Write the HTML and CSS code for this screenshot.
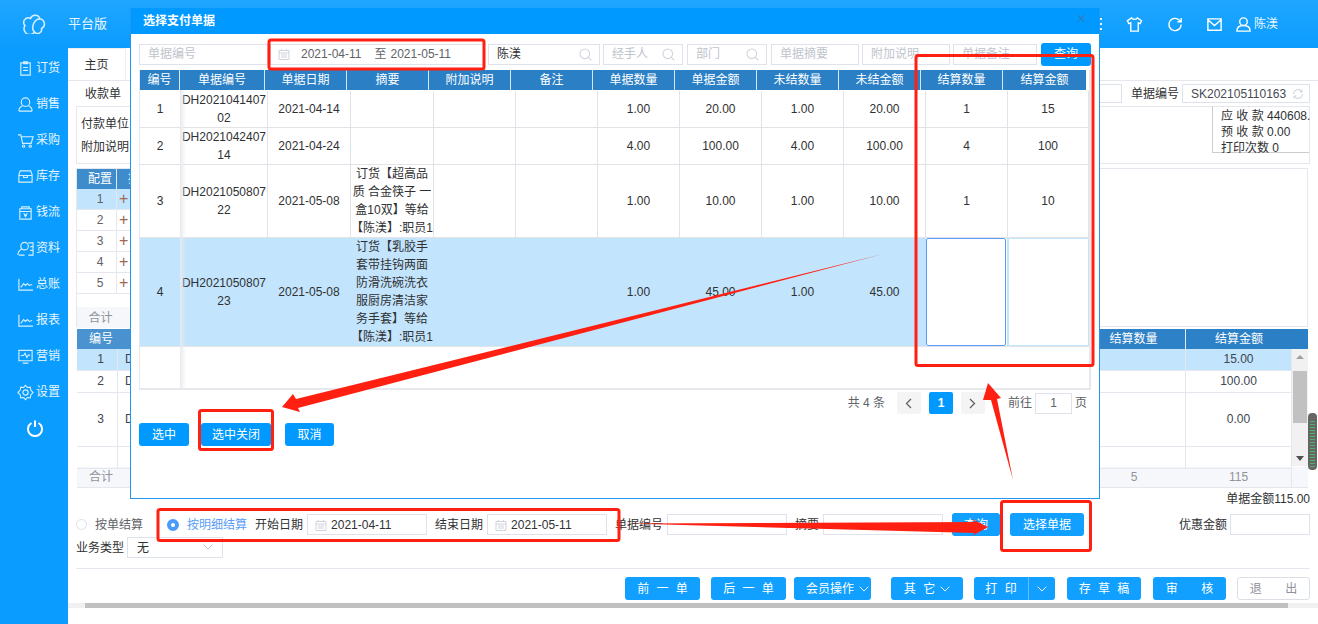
FILE: index.html
```html
<!DOCTYPE html>
<html lang="zh">
<head>
<meta charset="utf-8">
<title>选择支付单据</title>
<link rel="stylesheet" href="styles.css">
</head>
<body>
<svg class="defs" width="0" height="0">
  <symbol id="cal" viewBox="0 0 12 12"><path d="M1 2.500h10v9H1zM1 5h10M3.500 1v2M8.500 1v2M3 7h6M3 9h6" fill="none" stroke="currentColor"/></symbol>
  <symbol id="search" viewBox="0 0 13 13"><circle cx="5.800" cy="5.800" r="4.800" fill="none" stroke="currentColor" stroke-width="1.100"/><path d="M9.300 9.300l3 3" stroke="currentColor" stroke-width="1.100"/></symbol>
  <symbol id="chev" viewBox="0 0 10 6"><path d="M.7.700L5 5l4.300-4.300" fill="none" stroke="currentColor"/></symbol>
</svg>
<div class="app">
  <aside class="side">
    <div class="logo">
      <svg width="24" height="20" viewBox="0 0 24 20" fill="none" stroke="#d8efff" stroke-width="1.500"><path d="M7.500 4.500A5 5 0 0 1 17 5a5 5 0 0 1 1.500 9.500 4 4 0 0 1-7 3.500A5.500 5.500 0 0 1 2 11.500a4.500 4.500 0 0 1 5.500-7z"/><path d="M17 5c-3.500-.5-5 1.500-6.500 5S9.500 16 11.500 18"/></svg>
    </div>
    <nav class="nav">
      <a class="nav-i"><svg viewBox="0 0 18 18"><path d="M4 3h10v13H4zM7 2h4v2H7zM6.500 8h5M6.500 11h5"/></svg><span>订货</span></a>
      <a class="nav-i"><svg viewBox="0 0 18 18"><circle cx="9" cy="6.500" r="4.500"/><path d="M2 16c0-4 3-5.500 4.500-6M16 16c0-4-3-5.500-4.500-6M2 16h14"/></svg><span>销售</span></a>
      <a class="nav-i"><svg viewBox="0 0 18 18"><path d="M1 3h3l2 9h9l2-7H5"/><circle cx="7" cy="15" r="1.200"/><circle cx="14" cy="15" r="1.200"/></svg><span>采购</span></a>
      <a class="nav-i"><svg viewBox="0 0 18 18"><path d="M2 7l1.500-4h11L16 7v8H2zM2 8h14M7 8v2h4V8"/></svg><span>库存</span></a>
      <a class="nav-i"><svg viewBox="0 0 18 18"><path d="M5 5V3h8v2M3 5h12v11H3zM3 8h12M7 10l2 2 2-2M9 12v2M7.500 12.500h3"/></svg><span>钱流</span></a>
      <a class="nav-i"><svg viewBox="0 0 18 18"><circle cx="8" cy="6.500" r="4"/><path d="M1 16c0-4 2-5.500 4-6.500M2 16h6M12 3h5v13h-5M14 7h3M14 11h3"/></svg><span>资料</span></a>
      <a class="nav-i"><svg viewBox="0 0 18 18"><path d="M2 3v12h15M4 12l3-4 2 2 2-2 2 2 3-1"/></svg><span>总账</span></a>
      <a class="nav-i"><svg viewBox="0 0 18 18"><path d="M2 3v12h15M4 12l3-4 2 2 2-2 2 2 3-1"/></svg><span>报表</span></a>
      <a class="nav-i"><svg viewBox="0 0 18 18"><path d="M2 2.500h14v11H2zM6 16h6M4 8h3l1.500-2.500 2 4.500L12 7.500h2"/></svg><span>营销</span></a>
      <a class="nav-i"><svg viewBox="0 0 18 18"><path d="M9 1.500l2 2.200 3-.3.600 3L17 9l-2.400 2.600-.6 3-3-.3-2 2.200-2-2.200-3 .3-.6-3L1 9l2.400-2.600.6-3 3 .3z"/><circle cx="9" cy="9" r="2.800"/></svg><span>设置</span></a>
      <a class="nav-i nav-power"><svg viewBox="0 0 18 18"><path d="M5.500 4a7 7 0 1 0 7 0M9 1.500V8"/></svg></a>
    </nav>
  </aside>
  <main class="main">
    <header class="top">
      <span class="brand">平台版</span>
      <div class="top-r">
        <span class="dots"></span>
        <svg class="tic t1" viewBox="0 0 18 18"><path d="M6 2L1.500 5l1.500 3 2-.8V16h8V7.200l2 .8 1.500-3L12 2c-.5 2-5.500 2-6 0z"/></svg>
        <svg class="tic t2" viewBox="0 0 18 18"><path d="M15 9a6.500 6.500 0 1 1-2-4.700L15 6M15 2v4h-4"/></svg>
        <svg class="tic t3" viewBox="0 0 18 18"><path d="M2 3h14v12H2zM2 4l7 6 7-6"/></svg>
        <svg class="tic t4" viewBox="0 0 18 18"><circle cx="9" cy="6" r="4"/><path d="M2 16c0-4 3-6 7-6s7 2 7 6z"/></svg>
        <span class="uname">陈渼</span>
      </div>
    </header>
    <div class="tabs"><span class="tab">主页</span></div>
    <div class="content">
      <div class="row1">
        <span class="r1-t">收款单</span>
        <span class="inp r1-a"></span>
        <span class="r1-l">单据编号</span>
        <span class="inp r1-b">SK202105110163<svg width="12" height="12" viewBox="0 0 12 12" fill="none" stroke="#c5d0d8"><path d="M10.500 6A4.500 4.500 0 0 1 2 8M1.500 6A4.500 4.500 0 0 1 10 4M10 1.500V4H7.500M2 10.500V8h2.500"/></svg></span>
      </div>
      <div class="info">
        <div class="info-l"><div>付款单位</div><div>附加说明</div></div>
        <div class="info-r"><div>应 收 款 440608.</div><div>预 收 款 0.00</div><div>打印次数 0</div></div>
      </div>
      <section class="g1">
        <div class="g1-h"><span>配置</span><span>操</span></div>
        <div class="g1-r on"><span>1</span><span class="plus">+</span></div>
        <div class="g1-r"><span>2</span><span class="plus">+</span></div>
        <div class="g1-r"><span>3</span><span class="plus">+</span></div>
        <div class="g1-r"><span>4</span><span class="plus">+</span></div>
        <div class="g1-r"><span>5</span><span class="plus">+</span></div>
        <div class="g1-sum"><span>合计</span></div>
      </section>
      <section class="g2">
        <div class="g2-h g2-c"><span>编号</span><span></span><span>结算数量</span><span>结算金额</span><span></span></div>
        <div class="g2-bwrap">
          <div class="g2-rows">
            <div class="g2-r g2-c2 on"><span>1</span><span class="l">D</span><span></span><span>15.00</span></div>
            <div class="g2-r g2-c2"><span>2</span><span class="l">D</span><span></span><span>100.00</span></div>
            <div class="g2-r g2-c2 tall"><span>3</span><span class="l">D</span><span></span><span>0.00</span></div>
            <div class="g2-r g2-c2"><span></span><span></span><span></span><span></span></div>
          </div>
          <div class="vbar"><i class="up"></i><b></b><i class="dn"></i></div>
        </div>
        <div class="g2-sum g2-c"><span>合计</span><span></span><span>5</span><span>115</span><span></span></div>
      </section>
      <div class="amount">单据金额115.00</div>
      <div class="f-row">
        <span class="radio"></span><span class="f-lab">按单结算</span>
        <span class="radio sel"></span><span class="f-lab act">按明细结算</span>
        <label class="fld"><span>开始日期</span><span class="inp w120"><svg class="ci" width="12" height="12"><use href="#cal"/></svg>2021-04-11</span></label>
        <label class="fld"><span>结束日期</span><span class="inp w120"><svg class="ci" width="12" height="12"><use href="#cal"/></svg>2021-05-11</span></label>
        <label class="fld"><span>单据编号</span><span class="inp w120"></span></label>
        <label class="fld"><span>摘要</span><span class="inp w120"></span></label>
        <button class="btn f-q">查询</button>
        <button class="btn f-s">选择单据</button>
        <label class="fld disc"><span>优惠金额</span><span class="inp w80"></span></label>
      </div>
      <div class="type-row"><span>业务类型</span><span class="inp sel-i">无<svg class="chv" width="10" height="6"><use href="#chev"/></svg></span></div>
      <hr class="rule">
      <div class="acts">
        <button class="btn a75 g11 sp">前 一 单</button>
        <button class="btn a75 g8 sp">后 一 单</button>
        <button class="btn a77 g20">会员操作<svg width="10" height="6"><use href="#chev"/></svg></button>
        <button class="btn a72 g11 sp">其 它<svg width="10" height="6"><use href="#chev"/></svg></button>
        <div class="split g12"><button class="btn sp">打 印</button><button class="btn ar"><svg width="10" height="6"><use href="#chev"/></svg></button></div>
        <button class="btn a74 g12 sp">存 草 稿</button>
        <button class="btn a73 g11 spw">审 核</button>
        <button class="btn ghost spw">退 出</button>
      </div>
    </div>
    <div class="hbar"><b></b></div>
  </main>

  <div class="modal">
    <div class="m-head"><span>选择支付单据</span><span class="m-x">×</span></div>
    <div class="m-body">
      <div class="m-tools">
        <span class="inp ph t129">单据编号</span>
        <span class="inp t215"><svg class="ci" width="12" height="12"><use href="#cal"/></svg><span class="dr">2021-04-11</span><span class="dr2">至</span><span>2021-05-11</span></span>
        <span class="inp t112 dark">陈渼<svg class="si" width="13" height="13"><use href="#search"/></svg></span>
        <span class="inp ph t80">经手人<svg class="si" width="13" height="13"><use href="#search"/></svg></span>
        <span class="inp ph t80">部门<svg class="si" width="13" height="13"><use href="#search"/></svg></span>
        <span class="inp ph t88">单据摘要</span>
        <span class="inp ph t88">附加说明</span>
        <span class="inp ph t84">单据备注</span>
        <button class="btn m-q">查询</button>
      </div>
      <div class="m-table">
        <div class="m-th">
          <span>编号</span><span>单据编号</span><span>单据日期</span><span>摘要</span><span>附加说明</span><span>备注</span><span>单据数量</span><span>单据金额</span><span>未结数量</span><span>未结金额</span><span>结算数量</span><span>结算金额</span>
        </div>
        <div class="m-tr h37">
          <span class="num">1</span><span>DH202104140702</span><span>2021-04-14</span><span></span><span></span><span></span><span>1.00</span><span>20.00</span><span>1.00</span><span>20.00</span><span>1</span><span>15</span>
        </div>
        <div class="m-tr h37">
          <span>2</span><span>DH202104240714</span><span>2021-04-24</span><span></span><span></span><span></span><span>4.00</span><span>100.00</span><span>4.00</span><span>100.00</span><span>4</span><span>100</span>
        </div>
        <div class="m-tr h73">
          <span>3</span><span>DH202105080722</span><span>2021-05-08</span><span>订货【超高品<br>质 合金筷子 一<br>盒10双】等给<br>【陈渼】:职员1</span><span></span><span></span><span>1.00</span><span>10.00</span><span>1.00</span><span>10.00</span><span>1</span><span>10</span>
        </div>
        <div class="m-tr h109 sel-row">
          <span>4</span><span>DH202105080723</span><span>2021-05-08</span><span>订货【乳胶手<br>套带挂钩两面<br>防滑洗碗洗衣<br>服厨房清洁家<br>务手套】等给<br>【陈渼】:职员1</span><span></span><span></span><span>1.00</span><span>45.00</span><span>1.00</span><span>45.00</span><span class="edit"><i></i></span><span class="edit2"></span>
        </div>
        <div class="m-shadow"></div>
      </div>
      <div class="pager">
        <span class="p-t">共 4 条</span>
        <span class="p-b"><svg width="7" height="11" viewBox="0 0 7 11" fill="none" stroke="#606266" stroke-width="1.300"><path d="M6 1L1.500 5.500 6 10"/></svg></span>
        <span class="p-b cur">1</span>
        <span class="p-b"><svg width="7" height="11" viewBox="0 0 7 11" fill="none" stroke="#606266" stroke-width="1.300"><path d="M1 1l4.500 4.500L1 10"/></svg></span>
        <span class="p-go">前往</span><span class="inp p-i">1</span><span class="p-pg">页</span>
      </div>
      <div class="m-foot">
        <button class="btn b50">选中</button>
        <button class="btn b70">选中关闭</button>
        <button class="btn b49">取消</button>
      </div>
    </div>
  </div>

  <div class="thumb-float"></div>

  <svg class="marks" width="1318" height="624" viewBox="0 0 1318 624">
    <g fill="none" stroke="#ff2012" stroke-width="3">
      <rect x="269" y="40" width="215" height="29" rx="2"/>
      <rect x="916" y="55.500" width="177" height="310" rx="2"/>
      <rect x="199.500" y="410.500" width="73" height="39" rx="2"/>
      <rect x="158" y="509.500" width="461" height="31" rx="2"/>
      <rect x="1001.500" y="501.500" width="89" height="49" rx="2"/>
    </g>
    <g fill="#ff2012">
      <polygon points="883,254 296,399 293,394 282,407 300,412 298,408"/>
      <polygon points="1013,480 997,399 1001,398 988,383 983,400 991,400"/>
      <polygon points="628,523.500 975,522 972,519 988,527 972,536 975,533"/>
    </g>
  </svg>
</div>
</body>
</html>
```
FILE: styles.css
```css
* { box-sizing: border-box; }
html, body { margin: 0; height: 100%; overflow: hidden; background: #fff; }
body { font: 12px/18px "Liberation Sans", "Noto Sans CJK SC", sans-serif; color: #303133; }
.defs { position: absolute; }
button { font: inherit; border: 0; padding: 0; }
.app { position: relative; display: flex; width: 1318px; height: 624px; overflow: hidden; }

/* sidebar */
.side { flex: none; width: 68px; background: #0a9cff; color: #e6f5ff; }
.logo { height: 50px; padding: 14px 0 0 23px; background: linear-gradient(#1fa6ff, #0a9cff); }
.nav { display: flex; flex-direction: column; }
.nav-i { display: flex; align-items: center; height: 36px; padding-left: 17px; gap: 2px; }
.nav-i svg { width: 17px; height: 17px; fill: none; stroke: #d6efff; stroke-width: 1.200; flex: none; }
.nav-power { padding-left: 26px; }
.nav-power svg { width: 18px; height: 18px; stroke: #fff; stroke-width: 2; }

/* top bar */
.main { flex: 1; min-width: 0; display: flex; flex-direction: column; }
.top { flex: none; height: 48px; display: flex; align-items: center; color: #e6f5ff; background: linear-gradient(#1fa6ff, #0a9cff); }
.brand { font-size: 13px; }
.top-r { margin-left: auto; display: flex; align-items: center; padding-right: 40px; }
.dots { width: 2px; height: 12px; margin-right: 24px; background: repeating-linear-gradient(#e6f5ff 0 2px, transparent 2px 5px); }
.tic { width: 17px; height: 17px; fill: none; stroke: #fff; stroke-width: 1.500; }
.t2 { margin-left: 24px; }
.t3 { margin-left: 22px; }
.t4 { margin-left: 12px; }
.uname { margin-left: 2px; }

.tabs { flex: none; height: 33px; border-bottom: 1px solid #e4e7ed; }
.tab { display: inline-flex; align-items: center; justify-content: center; width: 58px; height: 32px; border: 1px solid #eceef2; border-width: 1px 1px 0 0; color: #303133; }

/* page */
.content { flex: none; height: 519px; padding: 3px 8px 0; }
.inp { display: inline-flex; align-items: center; height: 21px; border: 1px solid #dfe2ea; background: #fff; }
.row1 { display: flex; align-items: center; height: 19px; }
.r1-t { margin-left: 9px; }
.r1-a { margin-left: auto; width: 120px; height: 19px; }
.r1-l { margin: 0 3px 0 9px; }
.r1-b { width: 128px; height: 19px; padding-left: 8px; gap: 6px; color: #454a52; }
.info { display: flex; justify-content: space-between; height: 58px; margin-top: 3px; border: 1px solid #e4e7ed; }
.info-l { padding: 6px 0 0 4px; line-height: 23px; }
.info-r { width: 97px; height: 47px; padding: 2px 0 0 8px; border: 1px solid #ccc; border-width: 0 0 1px 1px; line-height: 16px; white-space: nowrap; margin-top: -1px; }
.g1 { height: 159px; margin-top: 4px; width: 1232px; border: 1px solid #e4e7ed; }
.g1-h, .g1-r, .g1-sum { display: flex; align-items: center; width: 74px; }
.g1-h { height: 20px; background: #3f8ccc; color: #fff; }
.g1-h span, .g1-r span { height: 100%; display: flex; align-items: center; justify-content: center; border-right: 1px solid #e4e7ed; }
.g1-h span:first-child, .g1-r span:first-child { width: 40px; padding-left: 7px; }
.g1-h span:last-child, .g1-r span:last-child { width: 34px; border-right: 0; }
.g1-r { height: 21px; border-bottom: 1px solid #e4e7ed; color: #606266; }
.g1-r .plus { color: #a06a50; font-size: 16px; justify-content: flex-start; padding-left: 2px; }
.g1-sum { height: 21px; margin-top: 13px; background: #f5f7fa; color: #909399; }
.g1-sum span { width: 40px; text-align: center; padding-left: 7px; }
.on { background: #c2e4fd; }
.g2 { height: 158px; margin-top: 2px; width: 1231px; margin-left: 1px; }
.g2-c { display: grid; grid-template-columns: 41px 1fr 104px 106px 16px; align-items: stretch; text-align: center; }
.g2-c2 { display: grid; grid-template-columns: 41px 1fr 104px 106px; text-align: center; }
.g2-h { height: 20px; line-height: 20px; color: #fff; background: linear-gradient(90deg, #4a93d0, #2a7fc5); }
.g2-c span:first-child { padding-left: 7px; }
.g2-h span:nth-child(3) { border-right: 1px solid #dcecf8; }
.g2-bwrap { display: flex; height: 117px; }
.g2-rows { flex: 1; }
.g2-r { height: 22px; border-bottom: 1px solid #e4e7ed; color: #404550; align-items: center; line-height: 21px; }
.g2-r.tall { height: 54px; }
.g2-r span { height: 100%; display: flex; align-items: center; justify-content: center; border-right: 1px solid #e4e7ed; }
.g2-r span:first-child { padding-left: 7px; }
.g2-r .l { justify-content: flex-start; padding-left: 7px; border-right: 0; }
.vbar { flex: none; width: 16px; background: #f1f1f1; display: flex; flex-direction: column; align-items: center; }
.vbar b { display: block; width: 14px; height: 52px; background: #c1c1c1; margin-top: 12px; }
.vbar i { display: block; width: 0; height: 0; border: 4px solid transparent; }
.vbar .up { border-bottom: 4px solid #a0a0a0; border-top: 0; margin-top: 6px; }
.vbar .dn { border-top: 5px solid #505050; border-bottom: 0; margin-top: auto; margin-bottom: 5px; }
.g2-sum { height: 21px; line-height: 20px; background: #f5f7fa; border-bottom: 1px solid #e4e7ed; color: #909399; margin-top: 1px; }
.g2-sum span:nth-child(4) { border-right: 1px solid #e4e7ed; }
.amount { height: 18px; margin-top: 3px; text-align: right; line-height: 18px; }
.f-row { display: flex; align-items: center; height: 21px; margin-top: 6px; }
.radio { flex: none; width: 11px; height: 11px; border: 1px solid #dcdfe6; border-radius: 50%; }
.radio.sel { border: 4px solid #4a9cf8; margin-left: 24px; background: #fff; width: 12px; height: 12px; }
.f-lab { margin-left: 8px; color: #606266; }
.f-lab.act { color: #5a9cf8; }
.fld { display: flex; align-items: center; gap: 4px; margin-left: 8px; }
.w120 { width: 120px; }
.w80 { width: 80px; }
.ci { color: #cfd3dc; flex: none; margin: 0 4px 0 7px; }
.btn { display: inline-flex; align-items: center; justify-content: center; gap: 5px; height: 23px; color: #fff; background: #11a0ff; border-radius: 3px; white-space: pre; }
.f-q { width: 48px; margin-left: 9px; }
.f-s { width: 74px; margin-left: 10px; }
.disc { margin-left: auto; gap: 3px; }
.type-row { display: flex; align-items: center; gap: 3px; height: 21px; margin-top: 2px; }
.sel-i { width: 96px; padding-left: 9px; position: relative; }
.chv { position: absolute; right: 9px; top: 6px; color: #c0c4cc; }
.rule { height: 1px; margin: 10px 0 0; border: 0; background: #e4e7ed; }
.acts { display: flex; align-items: center; height: 23px; margin-top: 8px; padding-left: 549px; }
.acts > * { flex: none; }
.g8 { margin-right: 8px; }
.g11 { margin-right: 11px; }
.g12 { margin-right: 12px; }
.g20 { margin-right: 20px; }
.a75 { width: 75px; }
.a77 { width: 77px; padding-left: 10px; }
.a72 { width: 72px; }
.a74 { width: 74px; }
.a73 { width: 73px; }
.sp { word-spacing: 4px; }
.spw { word-spacing: 20px; }
.split { display: flex; width: 81px; }
.split .btn:first-child { width: 55px; border-radius: 3px 0 0 3px; border-right: 1px solid #5fbfff; }
.split .ar { width: 26px; border-radius: 0 3px 3px 0; }
.ghost { width: 73px; background: #fff; border: 1px solid #dcdfe6; color: #909399; }
.hbar { flex: none; height: 5px; margin-top: 3px; background: #f1f1f1; padding-left: 17px; }
.hbar b { display: block; width: 1203px; height: 5px; background: #c1c1c1; }

/* modal */
.modal { position: absolute; left: 130px; top: 8px; width: 970px; height: 491px; background: #fff; border: 1px solid #2196f0; border-top: 0; display: flex; flex-direction: column; }
.m-head { flex: none; height: 26px; display: flex; align-items: center; justify-content: space-between; padding: 0 13px 0 12px; background: #0099ff; color: #fff; font-weight: 700; }
.m-x { color: #2a7fc5; font-size: 16px; font-weight: 400; margin-top: -5px; }
.m-body { flex: 1; padding: 9px 8px 0; }
.m-tools { display: flex; align-items: center; height: 22px; }
.ph { color: #c0c4cc; padding-left: 8px; position: relative; }
.t129 { width: 129px; margin-right: 2px; }
.t215 { width: 215px; color: #606266; margin-right: 3px; }
.dr { margin-right: 13px; margin-left: 7px; }
.dr2 { margin-right: 4px; }
.t112 { width: 112px; padding-left: 8px; margin-right: 3px; position: relative; color: #303133; }
.t80 { width: 80px; margin-right: 4px; }
.t88 { width: 88px; margin-right: 3px; }
.t84 { width: 84px; }
.si { position: absolute; right: 7px; top: 3px; color: #cfd3dc; }
.m-q { width: 50px; margin-left: 4px; background: #0099ff; }
.m-table { position: relative; height: 320px; margin-top: 5px; width: 952px; border: 1px solid #e6e8ee; border-width: 0 2px 2px 1px; overflow: hidden; }
.m-th { display: grid; grid-template-columns: 40px 85px 82px 82px 82px 82px 82px 82px 82px 82px 82px 83px; width: 946px; height: 20px; background: #2a7fc5; color: #fff; text-align: center; line-height: 20px; }
.m-th span { border-right: 1px solid #d5e6f4; }
.m-th span:last-child { border-right: 0; }
.m-th + .m-tr { margin-top: 1px; }
.m-tr { display: grid; grid-template-columns: 41px 87px 83px 83px 82px 82px 82px 82px 82px 82px 82px 81px; border-bottom: 1px solid #e1e3e8; text-align: center; color: #303133; }
.m-tr span { display: flex; align-items: center; justify-content: center; border-right: 1px solid #e1e3e8; word-break: break-all; overflow: hidden; }
.h37 { height: 37px; }
.h73 { height: 73px; }
.h109 { height: 109px; }
.sel-row { background: #c2e4fd; }
.sel-row span { border-right-color: #c2e4fd; }
.edit, .edit2 { background: #fff; }
.sel-row .edit { justify-content: flex-start; }
.edit i { display: block; width: 80px; height: 108px; border: 1.500px solid #5a9cf8; border-radius: 2px; }
.edit2 { border: 1px solid #c2e4fd; }
.m-shadow { position: absolute; left: 40px; top: 20px; bottom: 0; width: 6px; background: linear-gradient(90deg, #e8eaed, rgba(245,245,245,0)); }
.pager { display: flex; align-items: center; height: 22px; margin-top: 2px; padding-right: 3px; justify-content: flex-end; width: 951px; color: #606266; }
.p-t { margin-right: 12px; }
.p-b { width: 24px; height: 22px; margin-right: 8px; display: flex; align-items: center; justify-content: center; background: #f4f4f5; border-radius: 2px; font-weight: 700; }
.p-b.cur { background: #0099ff; color: #fff; }
.p-go { margin-left: 15px; margin-right: 3px; }
.p-i { width: 37px; height: 21px; justify-content: center; }
.p-pg { margin-left: 3px; }
.m-foot { display: flex; margin-top: 9px; }
.b50 { width: 50px; background: #0099ff; }
.b70 { width: 70px; margin-left: 12px; background: #0099ff; }
.b49 { width: 49px; margin-left: 14px; background: #0099ff; }

.thumb-float { position: absolute; left: 1308px; top: 413px; width: 9px; height: 57px; border-radius: 4px; background: repeating-linear-gradient(#4cb85f 0 1px, #666 1px 3px); border: 2px solid #666; border-top-width: 8px; }
.marks { position: absolute; left: 0; top: 0; pointer-events: none; }
```
